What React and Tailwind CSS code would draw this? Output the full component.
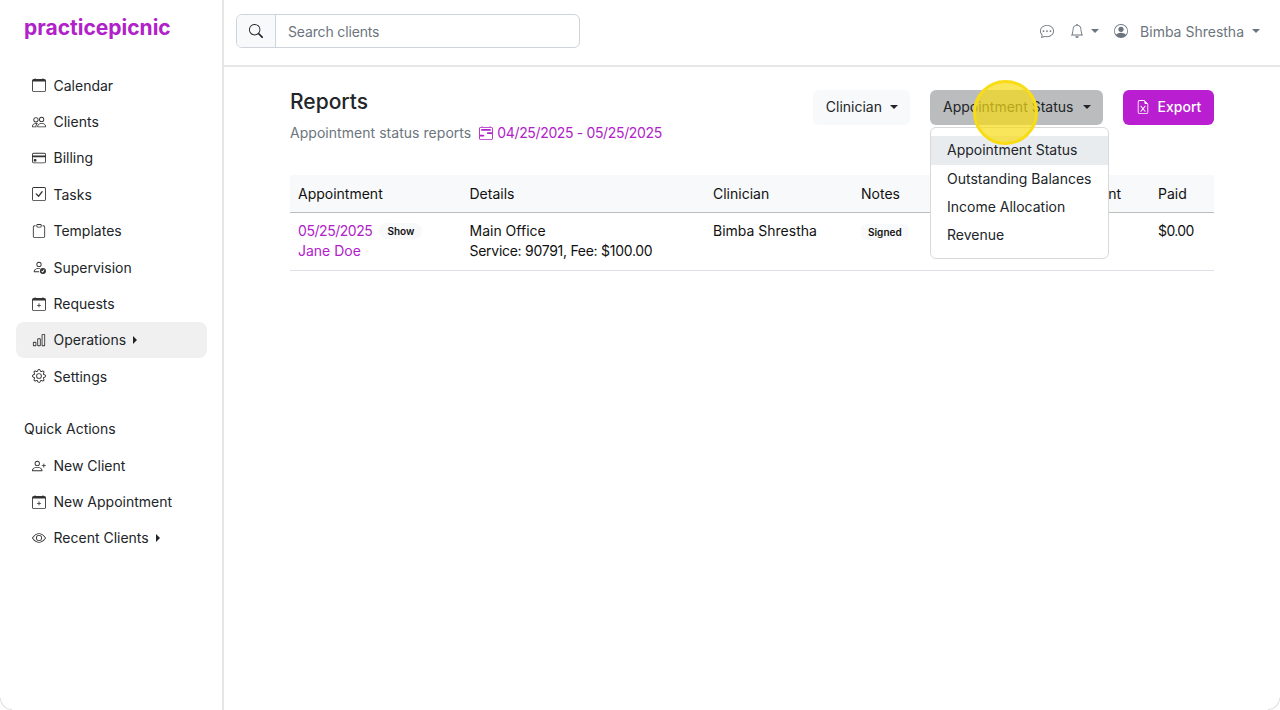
import { BsCalendar, BsPeople, BsCreditCard, BsCheckSquare, BsClipboard, BsPersonCheck, BsCalendarPlus, BsBarChart, BsGear, BsPersonPlus, BsEye, BsChatDots, BsBell, BsPersonCircle, BsFileEarmarkExcel, BsSearch, BsCalendar2Range } from 'react-icons/bs';

const NAV = [
    { label: 'Calendar', icon: BsCalendar },
    { label: 'Clients', icon: BsPeople },
    { label: 'Billing', icon: BsCreditCard },
    { label: 'Tasks', icon: BsCheckSquare },
    { label: 'Templates', icon: BsClipboard },
    { label: 'Supervision', icon: BsPersonCheck },
    { label: 'Requests', icon: BsCalendarPlus },
    { label: 'Operations', icon: BsBarChart, arrow: true, active: true },
    { label: 'Settings', icon: BsGear },
];

const QUICK = [
    { label: 'New Client', icon: BsPersonPlus },
    { label: 'New Appointment', icon: BsCalendarPlus },
    { label: 'Recent Clients', icon: BsEye, arrow: true },
];

function Caret({ className = '' }) {
    return <span className={`inline-block w-0 h-0 border-x-[4px] border-x-transparent border-t-[4px] border-t-current ${className}`} />;
}

function NavRow({ item, compact }) {
    const Icon = item.icon;
    return (
        <div className={`${compact ? 'h-[36px]' : 'h-[36.4px]'} flex items-center pl-4 rounded-lg text-[14px] text-[#212529] ${item.active ? 'bg-[#f0f0f0]' : ''}`}>
            <Icon className="w-[14px] h-[14px] mr-[7.5px] text-[#333]" />
            <span>{item.label}</span>
            {item.arrow && <span className="ml-[7px] w-0 h-0 border-y-[4px] border-y-transparent border-l-[4px] border-l-[#212529]" />}
        </div>
    );
}

export default function App() {
    return (
        <div className="relative w-[1280px] h-[710px] flex bg-white overflow-hidden text-[#212529] font-[430] font-['Inter','Noto_Sans',sans-serif]">
            <aside className="w-[224px] shrink-0 border-r-2 border-[#e6e6e6] pl-4 pr-[15px]">
                <div className="h-[67px] pl-2 pt-[11px] text-[21px] font-bold leading-[34px] text-[#b021c9]">practicepicnic</div>
                <nav>
                    {NAV.map(item => <NavRow key={item.label} item={item} />)}
                </nav>
                <div className="pl-2 mt-[23px] mb-[9px] text-[14px] leading-[21px]">Quick Actions</div>
                <nav>
                    {QUICK.map(item => <NavRow key={item.label} item={item} compact />)}
                </nav>
            </aside>

            <div className="flex-1 min-w-0">
                <header className="h-[67px] border-b-2 border-[#e6e6e6] flex items-center pl-3 pr-5 pb-[3px] text-[14px]">
                    <div className="w-[344px] h-[34px] flex border border-[#ced4da] rounded-md overflow-hidden">
                        <div className="w-[39px] flex items-center justify-center bg-[#f8f9fa] border-r border-[#ced4da]">
                            <BsSearch className="w-[14px] h-[14px]" />
                        </div>
                        <div className="flex-1 flex items-center pl-3 text-[#6c757d] tracking-[-0.15px]">Search clients</div>
                    </div>
                    <div className="ml-auto flex items-center text-[#6c757d] text-[14px]">
                        <BsChatDots className="w-[14px] h-[14px]" />
                        <BsBell className="w-[14px] h-[14px] ml-[16px]" />
                        <Caret className="ml-[7px]" />
                        <BsPersonCircle className="w-[14px] h-[14px] ml-[15px]" />
                        <span className="ml-[12px]">Bimba Shrestha</span>
                        <Caret className="ml-[8px]" />
                    </div>
                </header>

                <main className="relative pl-[66px] pr-[66px]">
                    <div className="flex items-start pt-[23px]">
                        <div>
                            <h1 className="text-[21px] font-medium leading-[24px]">Reports</h1>
                            <div className="mt-[8px] flex items-center text-[14px] leading-[21px] text-[#6c757d]">
                                <span className="tracking-[0.04px]">Appointment status reports</span>
                                <BsCalendar2Range className="w-[14px] h-[14px] ml-2 text-[#b021c9]" />
                                <span className="ml-[4px] text-[#b021c9] tracking-[-0.35px]">04/25/2025 - 05/25/2025</span>
                            </div>
                        </div>
                        <div className="ml-auto flex items-center text-[14px]">
                            <button className="h-[35px] pl-[13px] pr-3 pb-[2px] rounded-md bg-[#f8f9fa] flex items-center">
                                Clinician<Caret className="ml-2" />
                            </button>
                            <div className="relative ml-[20px]">
                                <button className="w-[173px] h-[35px] pl-[13px] pr-3 pb-[2px] rounded-md bg-[#bbbcbd] flex items-center justify-between">
                                    Appointment Status<Caret />
                                </button>
                                <div className="absolute z-10 left-0 top-[37px] w-[179px] h-[132px] py-2 bg-white border border-[#d9d9d9] rounded-md">
                                    <div className="h-[29px] flex items-center pl-4 pb-[2px] bg-[#e9ecef]">Appointment Status</div>
                                    <div className="h-[28px] flex items-center pl-4 pb-[2px]">Outstanding Balances</div>
                                    <div className="h-[28px] flex items-center pl-4 pb-[2px]">Income Allocation</div>
                                    <div className="h-[28px] flex items-center pl-4 pb-[2px]">Revenue</div>
                                </div>
                                <div className="absolute z-20 left-[43px] top-[-10px] w-[65px] h-[65px] rounded-full border-[3px] border-[#f7dc16] bg-[#f7dc16]/70" />
                            </div>
                            <button className="ml-[20px] h-[35px] w-[91px] pb-[2px] rounded-md bg-[#b91fd0] text-white font-medium flex items-center justify-center">
                                <BsFileEarmarkExcel className="w-[14px] h-[14px] mr-2" />Export
                            </button>
                        </div>
                    </div>

                    <table className="mt-[32px] w-[924px] table-fixed text-[14px] text-left text-[#111]">
                        <thead>
                            <tr className="h-[37px] bg-[#f8f9fa] border-b border-[#bdbdbd]">
                                <th className="w-[171.5px] pl-2 font-[430]">Appointment</th>
                                <th className="w-[243.5px] pl-2 font-[430]">Details</th>
                                <th className="w-[148px] pl-2 font-[430]">Clinician</th>
                                <th className="w-[115px] pl-2 font-[430]">Notes</th>
                                <th className="w-[182px] pl-2 font-[430] text-right pr-[29px]">Amount</th>
                                <th className="pl-2 font-[430]">Paid</th>
                            </tr>
                        </thead>
                        <tbody>
                            <tr className="h-[58px] border-b border-[#dee2e6] align-top">
                                <td className="pl-2 pt-[8.5px] leading-[20px] text-[#b021c9]">
                                    <div className="flex items-center tracking-[-0.45px]">05/25/2025
                                        <span className="ml-[7px] px-2 text-[10px] leading-[16px] font-semibold tracking-normal text-[#111] bg-[#f8f9fa] rounded-full">Show</span>
                                    </div>
                                    <div>Jane Doe</div>
                                </td>
                                <td className="pl-2 pt-[8.5px] leading-[20px]">
                                    <div>Main Office</div>
                                    <div className="tracking-[-0.28px]">Service: 90791, Fee: $100.00</div>
                                </td>
                                <td className="pl-2 pt-[8.5px] leading-[20px]">Bimba Shrestha</td>
                                <td className="pl-2 pt-[8.5px] leading-[20px]">
                                    <span className="inline-block px-[7px] text-[10px] leading-[16px] font-semibold bg-[#f8f9fa] rounded-md">Signed</span>
                                </td>
                                <td />
                                <td className="pl-2 pt-[8.5px] leading-[20px] tracking-[-0.6px]">$0.00</td>
                            </tr>
                        </tbody>
                    </table>
                </main>
            </div>

            {/* rounded corners of the recording frame */}
            <div className="absolute left-0 bottom-0 w-3 h-3 bg-white border-l border-b border-[#e0e0e0] rounded-bl-xl" />
            <div className="absolute right-0 bottom-0 w-3 h-3 bg-white border-r border-b border-[#e0e0e0] rounded-br-xl" />
        </div>
    );
}
